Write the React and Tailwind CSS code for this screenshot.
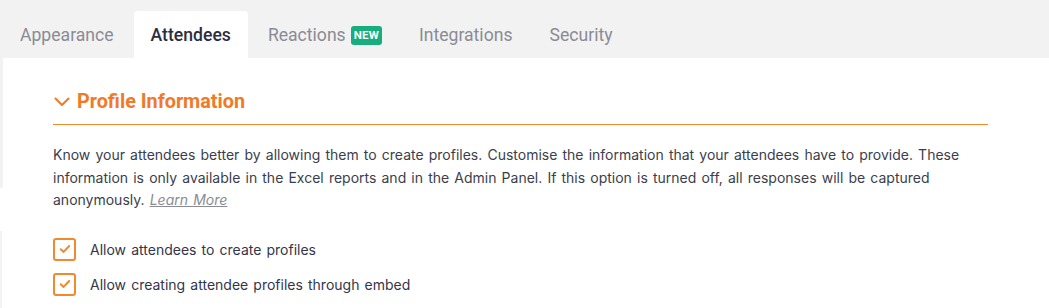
import React from "react";

const tabs = [
  { label: "Appearance" },
  { label: "Attendees", active: true },
  { label: "Reactions", badge: "NEW" },
  { label: "Integrations" },
  { label: "Security" },
];

function Check() {
  return (
    <span className="flex h-[23px] w-[23px] shrink-0 items-center justify-center rounded-[3px] border-2 border-[#f08a2c] bg-white">
      <svg width="12" height="10" viewBox="0 0 12 10" fill="none">
        <path d="M1.8 5.3 L4.6 7.9 L10.2 2" stroke="#f08a2c" strokeWidth="2" strokeLinecap="round" strokeLinejoin="round" />
      </svg>
    </span>
  );
}

export default function App() {
  return (
    <div className="h-[308px] w-[1049px] overflow-hidden bg-[#f2f2f2] font-['Roboto',sans-serif]">
      <div className="flex h-[58px] items-end gap-[3px] pl-[3px]">
        {tabs.map((t) => (
          <div
            key={t.label}
            className={
              "flex h-[47px] items-center px-[17px] pt-[1px] text-[17.6px] " +
              (t.active ? "rounded-t-[4px] bg-white font-medium text-[#2b2e3f]" : "text-[#8a8b94]")
            }
          >
            <span>{t.label}</span>
            {t.badge && (
              <span className="ml-[5px] rounded-[3px] bg-[#17ad7c] px-[3px] text-[11.5px] font-bold leading-[19px] tracking-[0.2px] text-white">
                {t.badge}
              </span>
            )}
          </div>
        ))}
      </div>
      <div className="flex bg-white">
        <div className="flex w-[3px] shrink-0 flex-col">
          <div className="h-[130px] bg-[#f2f2f2]" />
          <div className="h-[43px]" />
          <div className="h-[80px] w-[2px] bg-[#f2f2f2]" />
        </div>
        <div className="flex-1 pl-[50px] pr-[61px] pt-[33px]">
          <div className="flex items-center gap-[7px] border-b border-[#f58a2a] pb-[11px]">
            <svg width="16" height="12" viewBox="0 0 16 12" fill="none" className="ml-[1px]">
              <path d="M1.5 2.5 L8 9 L14.5 2.5" stroke="#f07a28" strokeWidth="2" strokeLinecap="round" strokeLinejoin="round" />
            </svg>
            <span className="text-[19.8px] font-bold leading-[22px] text-[#f07a28]">Profile Information</span>
          </div>
          <p className="mt-[19px] font-['Inter',sans-serif] text-[14px] leading-[22.5px] text-[#3b3e4d] [word-spacing:1.2px]">
            Know your attendees better by allowing them to create profiles. Customise the information that your attendees have to provide. These information is only available in the Excel reports and in the Admin Panel. If this option is turned off, all responses will be captured anonymously.{" "}
            <span className="italic text-[#8a8b94] underline">Learn More</span>
          </p>
          <div className="mt-[26px] flex flex-col gap-[12px]">
            {["Allow attendees to create profiles", "Allow creating attendee profiles through embed"].map((l) => (
              <label key={l} className="flex items-center gap-[14px] font-['Inter',sans-serif] text-[14px] text-[#33364a] [word-spacing:1.2px]">
                <Check />
                <span>{l}</span>
              </label>
            ))}
          </div>
        </div>
      </div>
    </div>
  );
}
